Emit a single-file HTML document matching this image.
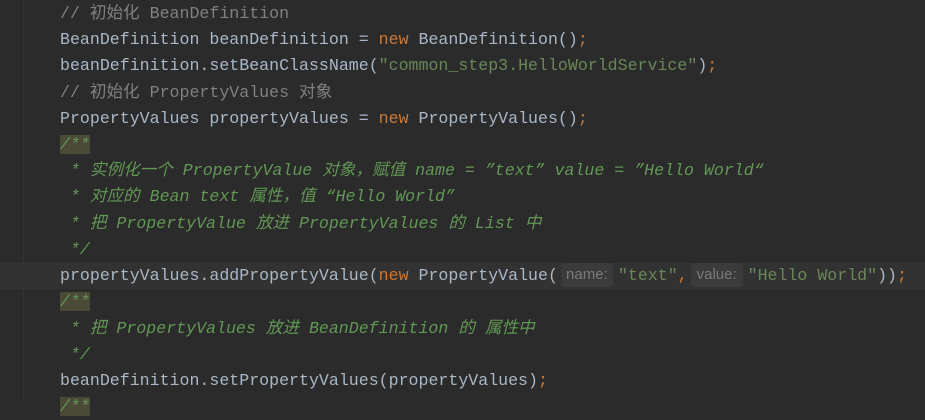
<!DOCTYPE html>
<html><head><meta charset="utf-8"><style>
html,body{margin:0;padding:0;background:#2b2b2b;width:925px;height:401px;overflow:hidden}
.g{position:absolute;left:23px;top:0;width:1px;height:401px;background:#333}
.cur{position:absolute;left:0;top:263px;width:925px;height:26px;background:#323232}
.l{position:absolute;left:60px;height:26px;line-height:26px;font-family:"Liberation Mono","Noto Sans CJK SC",monospace;font-size:16.6px;color:#a9b7c6;white-space:pre}
.c{color:#808080}.k{color:#cc7832}.s{color:#6a8759}
.d{color:#629755;font-style:italic}
.hl{background:#4a4a36}
.h{display:inline-block;box-sizing:border-box;text-align:center;font-family:"Liberation Sans",sans-serif;font-size:15px;color:#7a7a7a;background:#3b3b3b;border-radius:4px;height:24px;line-height:24px;vertical-align:middle;margin:0 5px 0 3px;position:relative;top:-1px}
</style></head><body>
<div class="g"></div><div class="cur"></div>
<div class="l c" style="top:1px">// 初始化 BeanDefinition</div>
<div class="l" style="top:27px">BeanDefinition beanDefinition = <span class="k">new</span> BeanDefinition()<span class="k">;</span></div>
<div class="l" style="top:53px">beanDefinition.setBeanClassName(<span class="s">"common_step3.HelloWorldService"</span>)<span class="k">;</span></div>
<div class="l c" style="top:80px">// 初始化 PropertyValues 对象</div>
<div class="l" style="top:106px">PropertyValues propertyValues = <span class="k">new</span> PropertyValues()<span class="k">;</span></div>
<div class="l d" style="top:132px"><span class="hl">/**</span></div>
<div class="l d" style="top:158px"> * 实例化一个 PropertyValue 对象，赋值 name = ”text” value = ”Hello World“</div>
<div class="l d" style="top:184px"> * 对应的 Bean text 属性，值 “Hello World”</div>
<div class="l d" style="top:211px"> * 把 PropertyValue 放进 PropertyValues 的 List 中</div>
<div class="l d" style="top:237px"> */</div>
<div class="l" style="top:263px">propertyValues.addPropertyValue(<span class="k">new</span> PropertyValue(<span class="h" style="width:52px">name:</span><span class="s">"text"</span><span class="k">,</span><span class="h" style="width:52px">value:</span><span class="s">"Hello World"</span>))<span class="k">;</span></div>
<div class="l d" style="top:289px"><span class="hl">/**</span></div>
<div class="l d" style="top:316px"> * 把 PropertyValues 放进 BeanDefinition 的 属性中</div>
<div class="l d" style="top:342px"> */</div>
<div class="l" style="top:368px">beanDefinition.setPropertyValues(propertyValues)<span class="k">;</span></div>
<div class="l d" style="top:394px"><span class="hl">/**</span></div>
</body></html>
